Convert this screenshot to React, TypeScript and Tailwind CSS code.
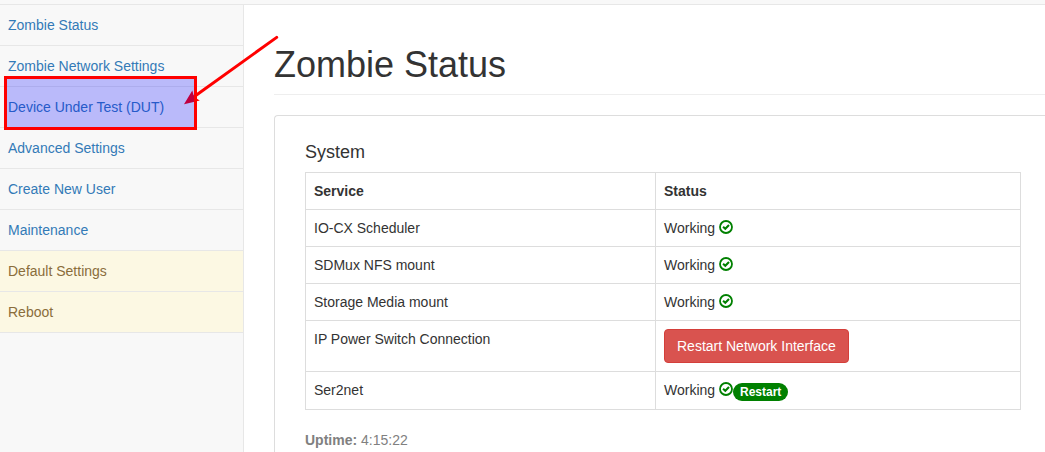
import clsx from "clsx";

const MENU = [
  { label: "Zombie Status", href: "#status" },
  { label: "Zombie Network Settings", href: "#network" },
  { label: "Device Under Test (DUT)", href: "#dut", marked: true },
  { label: "Advanced Settings", href: "#advanced" },
  { label: "Create New User", href: "#new-user" },
  { label: "Maintenance", href: "#maintenance" },
  { label: "Default Settings", href: "#defaults", warning: true },
  { label: "Reboot", href: "#reboot", warning: true },
];

const SERVICES = [
  { name: "IO-CX Scheduler", working: true },
  { name: "SDMux NFS mount", working: true },
  { name: "Storage Media mount", working: true },
  { name: "IP Power Switch Connection", working: false },
  { name: "Ser2net", working: true, restart: true },
];

function OkCircle() {
  return (
    <svg
      viewBox="0 0 14 14"
      className="inline-block size-3.5 align-[-1px]"
      fill="none"
      stroke="#008000"
      aria-hidden="true"
    >
      <circle cx="7" cy="7" r="6" strokeWidth="1.8" />
      <path d="M4.1 6.7 L6.3 8.7 L10 5" strokeWidth="2.1" />
    </svg>
  );
}

// Highlight box with the arrow pointing at it
function Callout() {
  return (
    <>
      <svg
        className="absolute left-[176px] -top-[55px] z-10 pointer-events-none"
        width="110"
        height="80"
        viewBox="176 32 110 80"
        aria-hidden="true"
      >
        <path
          d="M276.7 37.4 L194 96.8"
          stroke="#ff0000"
          strokeWidth="3"
          strokeLinecap="round"
        />
        <path d="M184 104.3 L192.3 90.5 L194 97 L199.8 100.6 Z" fill="#ff0000" />
      </svg>
      <div className="absolute left-1 -top-[11px] z-20 h-[54px] w-[193px] border-3 border-[#ff0000] bg-[#0000ff]/25 pointer-events-none" />
    </>
  );
}

function Sidebar() {
  return (
    <nav className="w-[244px] shrink-0 border-r border-[#e7e7e7] bg-[#f8f8f8]">
      <ul>
        {MENU.map((item) => (
          <li key={item.href} className="relative border-b border-[#e7e7e7]">
            <a
              href={item.href}
              className={clsx(
                "block px-2 py-2.5",
                item.warning ? "bg-[#fcf8e3] text-[#8a6d3b]" : "text-[#337ab7]"
              )}
            >
              {item.label}
            </a>
            {item.marked && <Callout />}
          </li>
        ))}
      </ul>
    </nav>
  );
}

function ServiceTable() {
  return (
    <table className="w-full table-fixed border-collapse text-left [&_td]:border [&_td]:border-[#ddd] [&_td]:p-2 [&_td]:align-top [&_th]:border [&_th]:border-[#ddd] [&_th]:p-2">
      <thead>
        <tr>
          <th className="w-[350px]">Service</th>
          <th>Status</th>
        </tr>
      </thead>
      <tbody>
        {SERVICES.map((service) => (
          <tr key={service.name}>
            <td>{service.name}</td>
            <td>
              {service.working ? (
                <>
                  Working <OkCircle />
                </>
              ) : (
                <button className="block rounded border border-[#d43f3a] bg-[#d9534f] px-3 py-1.5 text-white">
                  Restart Network Interface
                </button>
              )}
              {service.restart && (
                <button className="rounded-full bg-[#008000] px-[7px] py-[3px] align-[-1px] text-xs leading-3 font-bold text-white">
                  Restart
                </button>
              )}
            </td>
          </tr>
        ))}
      </tbody>
    </table>
  );
}

export default function App() {
  return (
    <div className="flex min-h-screen flex-col bg-white font-['Liberation_Sans',Arial,sans-serif] text-sm leading-5 text-[#333]">
      <header className="h-[5px] border-b border-[#e7e7e7] bg-[#f8f8f8]" />
      <div className="flex flex-1">
        <Sidebar />
        <main className="flex min-w-0 flex-1 flex-col pl-[30px]">
          <h1 className="mt-10 mb-5 border-b border-[#eee] pb-[9px] text-4xl leading-10">
            Zombie Status
          </h1>
          <section className="flex-1 rounded-tl border-t border-l border-[#ddd] pt-[26px] pr-6 pl-[30px]">
            <h2 className="mb-2.5 text-lg leading-5">System</h2>
            <ServiceTable />
            <p className="mt-5 text-[#808080]">
              <strong>Uptime:</strong> 4:15:22
            </p>
          </section>
        </main>
      </div>
    </div>
  );
}
